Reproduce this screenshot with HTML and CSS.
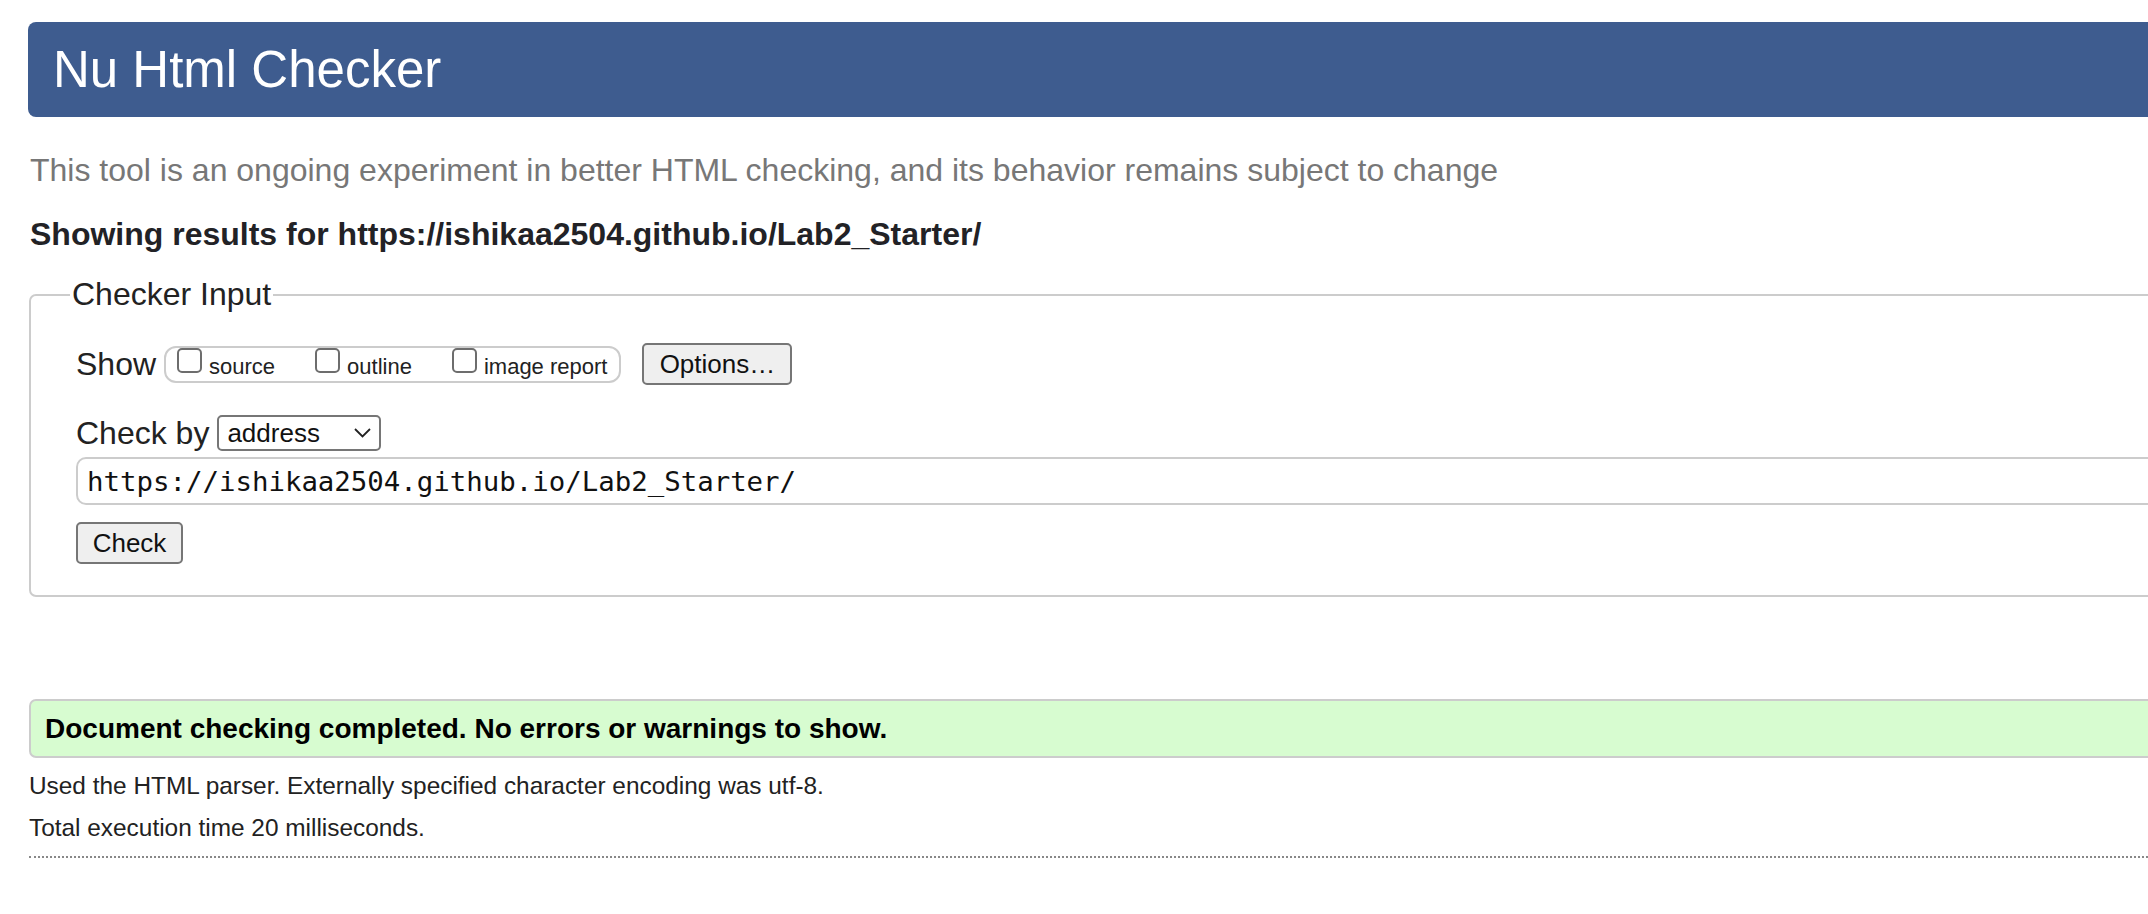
FILE: index.html
```html
<!DOCTYPE html>
<html lang="en">
<head>
<meta charset="utf-8">
<title>Showing results for https://ishikaa2504.github.io/Lab2_Starter/ - Nu Html Checker</title>
<link rel="stylesheet" href="styles.css">
</head>
<body>
<div class="page">
  <h1 class="banner">Nu Html Checker</h1>
  <p class="intro">This tool is an ongoing experiment in better HTML checking, and its behavior remains subject to change</p>
  <p class="showing">Showing results for https://ishikaa2504.github.io/Lab2_Starter/</p>

  <fieldset class="checker">
    <legend class="checker-legend">Checker Input</legend>
    <div class="row row-show">
      <span class="label">Show</span>
      <div class="opts">
        <label class="opt"><input type="checkbox" class="cb"><span>source</span></label>
        <label class="opt"><input type="checkbox" class="cb"><span>outline</span></label>
        <label class="opt"><input type="checkbox" class="cb"><span>image report</span></label>
      </div>
      <button class="btn btn-options" type="button">Options…</button>
    </div>
    <div class="row row-by">
      <span class="label">Check by</span>
      <div class="select">
        <span>address</span>
        <svg class="chev" width="17" height="10" viewBox="0 0 17 10"><path d="M1 1 L8.5 8.5 L16 1" fill="none" stroke="#222" stroke-width="1.8"/></svg>
      </div>
    </div>
    <div class="url">https://ishikaa2504.github.io/Lab2_Starter/</div>
    <div class="row row-check">
      <button class="btn btn-check" type="button">Check</button>
    </div>
  </fieldset>

  <div class="success">Document checking completed. No errors or warnings to show.</div>
  <p class="details first">Used the HTML parser. Externally specified character encoding was utf-8.</p>
  <p class="details">Total execution time 20 milliseconds.</p>
  <hr class="rule">
</div>
</body>
</html>
```

FILE: styles.css
```css
html {
  overflow: hidden;
  background: #ffffff;
}

body {
  margin: 0;
  font-family: "Liberation Sans", Arial, Helvetica, sans-serif;
  color: #222222;
}

.page {
  width: 2400px;
  padding: 22px 0 0 28px;
  display: flex;
  flex-direction: column;
}

.banner {
  margin: 0;
  height: 95px;
  background: #3e5c8f;
  color: #ffffff;
  border-radius: 8px 0 0 8px;
  font-size: 51px;
  font-weight: normal;
  padding-left: 25px;
  display: flex;
  align-items: center;
}

.intro {
  margin: 35px 0 0 2px;
  font-size: 32px;
  line-height: 37px;
  color: #777777;
}

.showing {
  margin: 27px 0 0 2px;
  font-size: 32px;
  line-height: 37px;
  font-weight: bold;
  color: #222226;
}

.checker {
  margin: 23px 0 0 1px;
  padding: 0 0 31px 45px;
  border: 2px solid #cccccc;
  border-radius: 7px;
  min-width: 0;
}

.checker-legend {
  font-size: 32px;
  padding: 0 2px;
  margin-left: -6px;
  color: #222222;
}

.row {
  display: flex;
  align-items: center;
}

.label {
  font-size: 32px;
  color: #222222;
}

.row-show {
  margin-top: 30px;
  height: 42px;
}

.opts {
  margin-left: 8px;
  height: 37px;
  box-sizing: border-box;
  border: 2px solid #cccccc;
  border-radius: 12px;
  padding: 0 12px 0 11px;
  display: flex;
  align-items: flex-start;
  gap: 40px;
  align-self: flex-start;
  margin-top: 3px;
}

.opt {
  display: flex;
  align-items: flex-start;
  font-size: 22px;
  color: #222222;
}

.opt span {
  margin-top: 6px;
  margin-left: 7px;
}

.cb {
  appearance: none;
  -webkit-appearance: none;
  margin: 0;
  width: 25px;
  height: 25px;
  box-sizing: border-box;
  border: 2px solid #6d6d6d;
  border-radius: 5px;
  background: #ffffff;
}

.btn {
  font-family: "Liberation Sans", Arial, Helvetica, sans-serif;
  font-size: 26px;
  color: #111111;
  background: #efefef;
  border: 2px solid #767676;
  border-radius: 5px;
  box-sizing: border-box;
  padding: 0;
}

.btn-options {
  margin-left: 21px;
  width: 150px;
  height: 42px;
}

.row-by {
  margin-top: 30px;
  height: 36px;
}

.select {
  margin-left: 8px;
  width: 164px;
  height: 36px;
  box-sizing: border-box;
  border: 2px solid #767676;
  border-radius: 5px;
  padding: 0 8px;
  display: flex;
  align-items: center;
  justify-content: space-between;
  font-size: 26px;
  color: #111111;
}

.chev {
  display: block;
}

.url {
  margin-top: 6px;
  height: 48px;
  box-sizing: border-box;
  border: 2px solid #cccccc;
  border-radius: 10px;
  padding-left: 9px;
  display: flex;
  align-items: center;
  font-family: "DejaVu Sans Mono", "Liberation Mono", monospace;
  font-size: 27.4px;
  color: #111111;
}

.row-check {
  margin-top: 17px;
}

.btn-check {
  width: 107px;
  height: 42px;
}

.success {
  margin: 102px 0 0 1px;
  height: 59px;
  box-sizing: border-box;
  background: #d7fcd0;
  border: 2px solid #cccccc;
  border-radius: 7px;
  padding-left: 14px;
  display: flex;
  align-items: center;
  font-size: 28px;
  font-weight: bold;
  color: #000000;
}

.details {
  margin: 0 0 0 1px;
  font-size: 24.4px;
  line-height: 28px;
  color: #222222;
}

.details.first {
  margin-top: 14px;
}

.details + .details {
  margin-top: 14px;
}

.rule {
  margin: 14px 0 0 1px;
  border: 0;
  border-top: 2px dotted #888888;
  height: 0;
}
```
